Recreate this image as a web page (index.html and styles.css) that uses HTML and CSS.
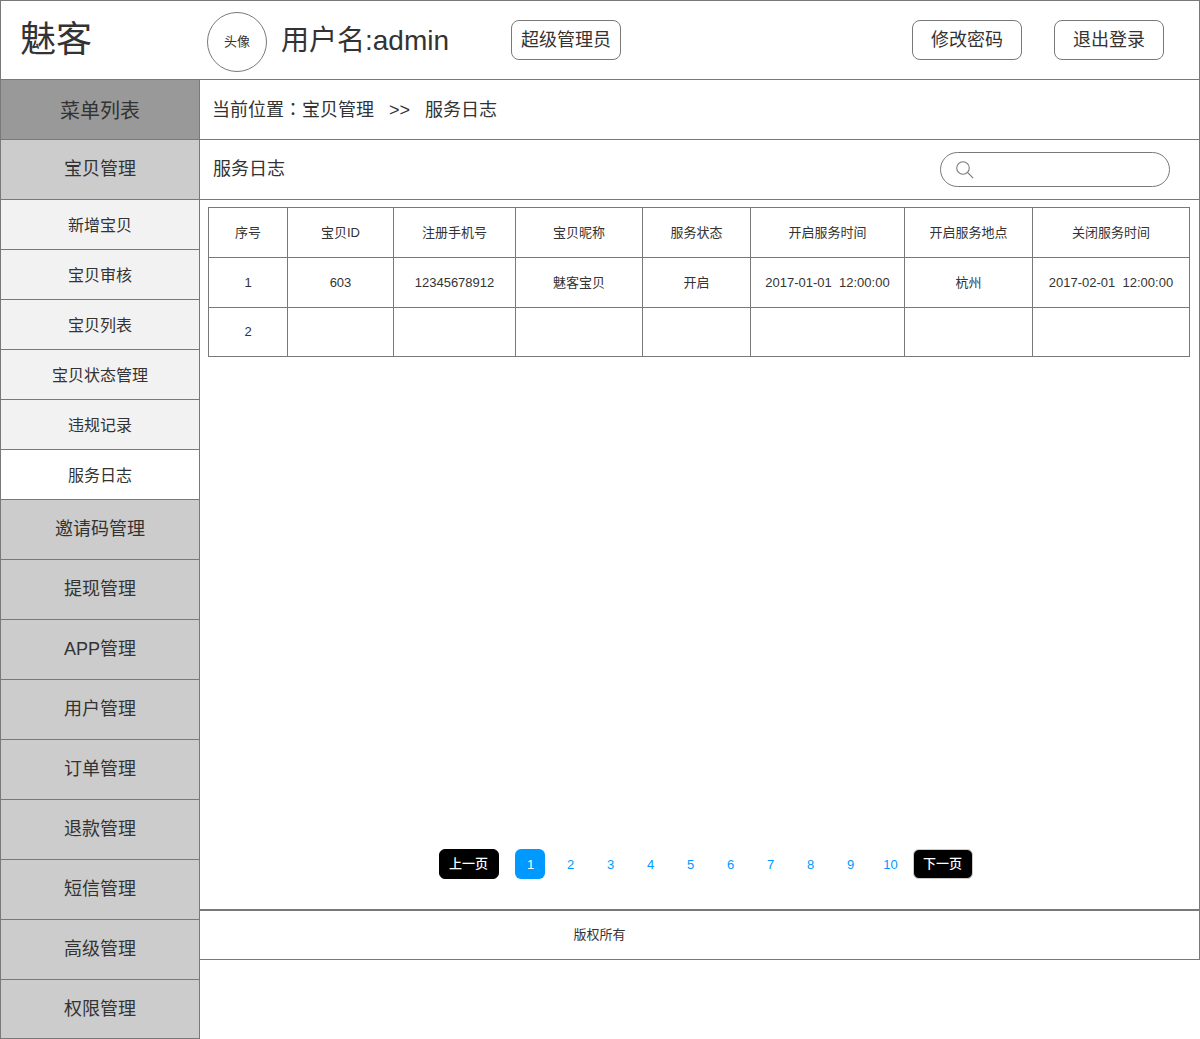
FILE: index.html
```html
<!DOCTYPE html>
<html lang="zh-CN">
<head>
<meta charset="utf-8">
<title>服务日志</title>
<link rel="stylesheet" href="styles.css">
</head>
<body>
<header class="topbar">
  <div class="logo">魅客</div>
  <div class="avatar">头像</div>
  <div class="username">用户名:admin</div>
  <button type="button" class="btn">超级管理员</button>
  <div class="actions">
    <button type="button" class="btn">修改密码</button>
    <button type="button" class="btn">退出登录</button>
  </div>
</header>
<div class="layout">
  <nav class="sidebar" aria-label="菜单列表">
    <div class="menu-title">菜单列表</div>
    <a class="menu-item" href="#">宝贝管理</a>
    <a class="sub-item" href="#">新增宝贝</a>
    <a class="sub-item" href="#">宝贝审核</a>
    <a class="sub-item" href="#">宝贝列表</a>
    <a class="sub-item" href="#">宝贝状态管理</a>
    <a class="sub-item" href="#">违规记录</a>
    <a class="sub-item current" href="#" aria-current="page">服务日志</a>
    <a class="menu-item" href="#">邀请码管理</a>
    <a class="menu-item" href="#">提现管理</a>
    <a class="menu-item" href="#">APP管理</a>
    <a class="menu-item" href="#">用户管理</a>
    <a class="menu-item" href="#">订单管理</a>
    <a class="menu-item" href="#">退款管理</a>
    <a class="menu-item" href="#">短信管理</a>
    <a class="menu-item" href="#">高级管理</a>
    <a class="menu-item" href="#">权限管理</a>
  </nav>
  <main class="main">
    <div class="breadcrumb"><span>当前位置<span class="colon" lang="zh-TW">&#xFF1A;</span>宝贝管理</span><span>&gt;&gt;</span><span>服务日志</span></div>
    <div class="title-row">
      <h1 class="title">服务日志</h1>
      <label class="search">
        <svg class="search-icon" viewBox="0 0 18 18" aria-hidden="true"><circle cx="7" cy="7" r="6.3"/><path d="M11.4 11.4L17.2 17.2"/></svg>
        <input type="search" class="search-input" aria-label="搜索">
      </label>
    </div>
    <section class="content">
      <table class="log-table">
        <colgroup>
          <col class="col-index"><col class="col-id"><col class="col-phone"><col class="col-name">
          <col class="col-status"><col class="col-open"><col class="col-place"><col class="col-close">
        </colgroup>
        <thead>
          <tr><th>序号</th><th>宝贝ID</th><th>注册手机号</th><th>宝贝昵称</th><th>服务状态</th><th>开启服务时间</th><th>开启服务地点</th><th>关闭服务时间</th></tr>
        </thead>
        <tbody>
          <tr><td>1</td><td>603</td><td>12345678912</td><td>魅客宝贝</td><td>开启</td><td>2017-01-01&nbsp; 12:00:00</td><td>杭州</td><td>2017-02-01&nbsp; 12:00:00</td></tr>
          <tr><td>2</td><td></td><td></td><td></td><td></td><td></td><td></td><td></td></tr>
        </tbody>
      </table>
      <div class="pagination">
        <button type="button" class="step prev">上一页</button>
        <div class="pages">
          <a class="page active" href="#" aria-current="page">1</a>
          <a class="page" href="#">2</a>
          <a class="page" href="#">3</a>
          <a class="page" href="#">4</a>
          <a class="page" href="#">5</a>
          <a class="page" href="#">6</a>
          <a class="page" href="#">7</a>
          <a class="page" href="#">8</a>
          <a class="page" href="#">9</a>
          <a class="page" href="#">10</a>
        </div>
        <button type="button" class="step next">下一页</button>
      </div>
    </section>
    <footer class="footer">版权所有</footer>
  </main>
</div>
</body>
</html>
```
FILE: styles.css
```css
* {
  box-sizing: border-box;
}

body {
  margin: 0;
  background: #fff;
  color: #333;
  font-family: "Liberation Sans", "Noto Sans CJK SC", sans-serif;
  font-size: 13px;
  line-height: 16px;
}

button,
input {
  font: inherit;
  color: inherit;
}

a {
  color: inherit;
  text-decoration: none;
}

.topbar {
  display: flex;
  align-items: center;
  height: 80px;
  padding: 0 35px 0 19px;
  border: 1px solid #797979;
}

.logo {
  width: 187px;
  font-size: 36px;
  line-height: 40px;
}

.avatar {
  display: flex;
  align-items: center;
  justify-content: center;
  width: 60px;
  height: 60px;
  margin-top: 4px;
  border: 1px solid #797979;
  border-radius: 50%;
}

.username {
  margin: 2px 62px 0 14px;
  font-size: 28px;
  line-height: 32px;
  white-space: nowrap;
}

.btn {
  width: 110px;
  height: 40px;
  padding: 0;
  border: 1px solid #797979;
  border-radius: 8px;
  background: #fff;
  font-size: 18px;
  line-height: 36px;
  white-space: nowrap;
}

.actions {
  display: flex;
  gap: 32px;
  margin-left: auto;
}

.layout {
  display: grid;
  grid-template-columns: 200px minmax(0, 1fr);
  align-items: start;
}

.sidebar {
  border: solid #797979;
  border-width: 0 1px;
  text-align: center;
}

.menu-title,
.menu-item,
.sub-item {
  display: block;
  height: 60px;
  border-bottom: 1px solid #797979;
}

.menu-title {
  background: #999;
  font-size: 20px;
  line-height: 62px;
}

.menu-item {
  background: #ccc;
  font-size: 18px;
  line-height: 58px;
}

.menu-item:last-child {
  height: 59px;
}

.sub-item {
  height: 50px;
  background: #f2f2f2;
  font-size: 16px;
  line-height: 52px;
}

.sub-item.current {
  background: #fff;
}

.main {
  border-right: 1px solid #797979;
}

.breadcrumb {
  display: flex;
  gap: 15px;
  height: 60px;
  padding-left: 12px;
  border-bottom: 1px solid #797979;
  font-size: 18px;
  line-height: 60px;
}

.colon {
  font-family: "Noto Sans CJK TC", sans-serif;
  line-height: 1;
}

.title-row {
  display: flex;
  align-items: center;
  justify-content: space-between;
  height: 60px;
  padding: 0 29px 0 13px;
  border-bottom: 1px solid #797979;
}

.title {
  margin: 0;
  font-size: 18px;
  font-weight: 400;
  line-height: 59px;
}

.search {
  display: flex;
  align-items: center;
  gap: 8px;
  width: 230px;
  height: 35px;
  padding: 0 16px 0 15px;
  border: 1px solid #797979;
  border-radius: 18px;
}

.search-icon {
  flex: none;
  width: 18px;
  height: 18px;
  fill: none;
  stroke: #797979;
  stroke-width: 1.1;
}

.search-input {
  flex: 1;
  min-width: 0;
  border: 0;
  outline: 0;
  background: none;
}

.content {
  display: flex;
  flex-direction: column;
  justify-content: space-between;
  min-height: 710px;
  padding: 7px 9px 30px 8px;
  border-bottom: 1px solid #797979;
}

.log-table {
  width: 100%;
  table-layout: fixed;
  border-collapse: collapse;
  text-align: center;
}

.log-table th,
.log-table td {
  height: 50px;
  padding: 0;
  border: 1px solid #797979;
  font-weight: 400;
}

.log-table tbody tr:last-child td {
  height: 49px;
}

.col-index { width: 79px; }
.col-id { width: 106px; }
.col-phone { width: 122px; }
.col-name { width: 127px; }
.col-status { width: 108px; }
.col-open { width: 154px; }
.col-place { width: 128px; }
.col-close { width: 157px; }

.pagination {
  display: flex;
  justify-content: center;
  padding-left: 13px;
}

.step {
  width: 60px;
  height: 30px;
  padding: 0;
  border: 1px solid #000;
  border-radius: 6px;
  background: #000;
  color: #fff;
  font-weight: 500;
}

.prev {
  margin-right: 16px;
}

.next {
  margin-left: 8px;
  border-color: #ccc;
}

.pages {
  display: flex;
  gap: 10px;
}

.page {
  width: 30px;
  padding-left: 2px;
  border-radius: 6px;
  color: #0099ff;
  line-height: 31px;
  height: 30px;
  text-align: center;
}

.page.active {
  background: #0099ff;
  color: #fff;
}

.footer {
  padding-right: 200px;
  border: solid #797979;
  border-width: 1px 0;
  line-height: 48px;
  text-align: center;
}
```
